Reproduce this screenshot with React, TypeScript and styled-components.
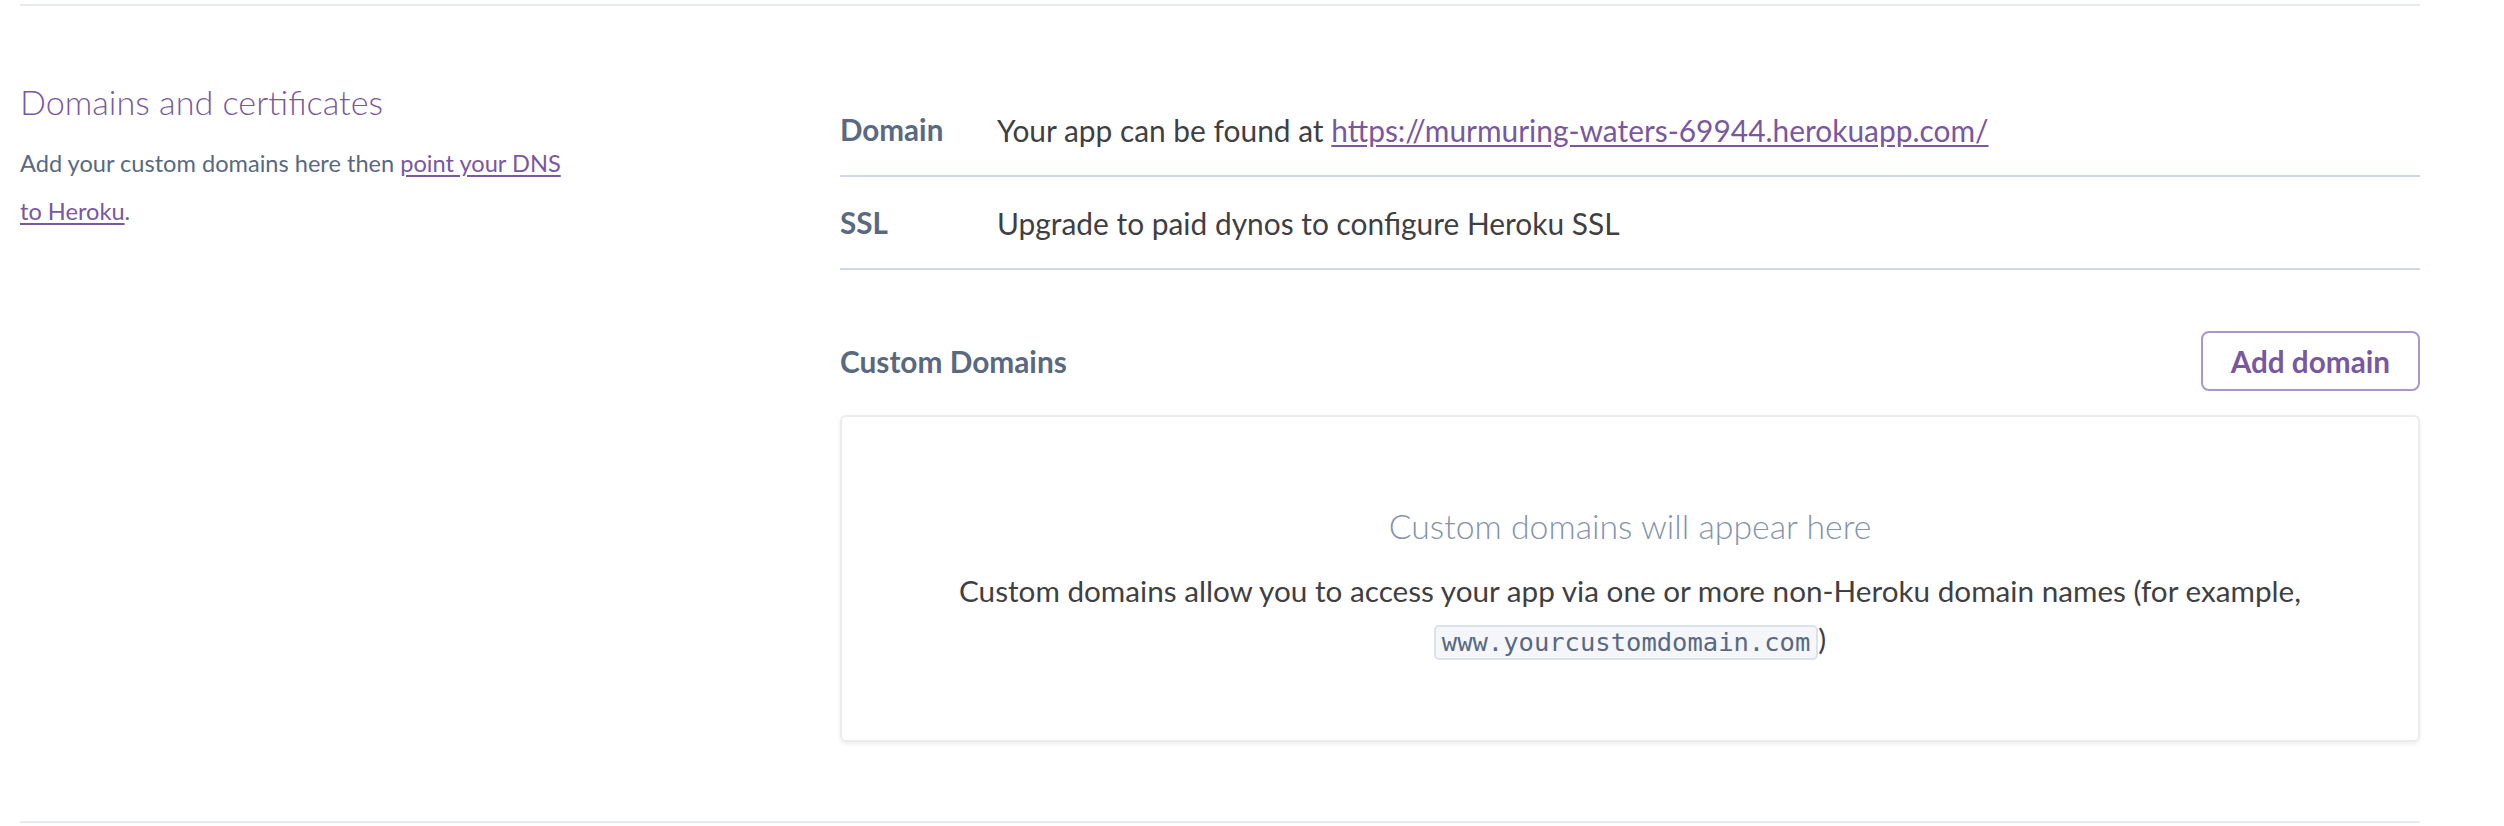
import React from "react";
import styled, { createGlobalStyle } from "styled-components";

const GlobalStyle = createGlobalStyle`
  html, body { margin: 0; padding: 0; background: #ffffff; }
  body { font-family: Lato, "Open Sans", sans-serif; -webkit-font-smoothing: antialiased; }
  * { box-sizing: border-box; }
`;

const Page = styled.div`
  padding: 4px 84px 0 20px;
`;

const Section = styled.section`
  display: grid;
  grid-template-columns: 550px 1580px;
  column-gap: 270px;
  align-items: start;
  border-top: 2px solid #e6e9f2;
  border-bottom: 2px solid #e6e9f2;
  padding: 78px 0 79px;
`;

const Aside = styled.div`
  display: flex;
  flex-direction: column;
  gap: 19px;
`;

const SectionTitle = styled.h3`
  margin: 0;
  font-size: 34.2px;
  line-height: 36px;
  font-weight: 300;
  color: #79589f;
`;

const SectionDesc = styled.p`
  margin: 0;
  font-size: 23.6px;
  line-height: 48px;
  color: #596981;
`;

const TextLink = styled.a`
  color: #79589f;
  text-decoration: underline;
  text-underline-offset: 3px;
`;

const Main = styled.div`
  display: flex;
  flex-direction: column;
`;

const InfoRow = styled.div`
  display: flex;
  align-items: center;
  height: 93px;
  border-bottom: 2px solid #cfd8e6;
`;

const Label = styled.div`
  width: 157px;
  flex: none;
  font-size: 29.6px;
  font-weight: 700;
  color: #596981;
`;

const Value = styled.div`
  font-size: 29.9px;
  line-height: 36px;
  color: #3f3f44;
`;

const SubHeader = styled.div`
  display: flex;
  align-items: center;
  justify-content: space-between;
  margin-top: 61px;
  height: 60px;
`;

const SubTitle = styled.h4`
  margin: 0;
  font-size: 29.8px;
  font-weight: 700;
  color: #596981;
`;

const OutlineButton = styled.button`
  height: 60px;
  padding: 0 28px;
  border: 2px solid #ab96c8;
  border-radius: 8px;
  background: #ffffff;
  font-family: Lato, sans-serif;
  font-size: 29.7px;
  font-weight: 700;
  color: #79589f;
  cursor: pointer;
`;

const EmptyCard = styled.div`
  margin-top: 24px;
  height: 327px;
  padding: 88px 40px 0;
  border: 2px solid #ececec;
  border-radius: 6px;
  box-shadow: 0 2px 4px rgba(0, 0, 0, 0.07);
  display: flex;
  flex-direction: column;
  align-items: center;
  text-align: center;
`;

const EmptyTitle = styled.div`
  font-size: 33.8px;
  line-height: 42px;
  font-weight: 300;
  color: #8593ad;
`;

const EmptyText = styled.p`
  margin: 20px 0 0;
  font-size: 29.7px;
  line-height: 48px;
  color: #3f3f44;
`;

const Code = styled.code`
  display: inline-block;
  white-space: nowrap;
  padding: 0 6px;
  line-height: 31px;
  border: 2px solid #dde1ea;
  border-radius: 5px;
  background: #f4f6fa;
  font-family: "DejaVu Sans Mono", "Liberation Mono", monospace;
  font-size: 25.5px;
  color: #596981;
  vertical-align: middle;
`;

export default function App() {
  return (
    <>
      <GlobalStyle />
      <Page>
        <Section>
          <Aside>
            <SectionTitle>Domains and certificates</SectionTitle>
            <SectionDesc>
              Add your custom domains here then <TextLink href="#">point your DNS to Heroku</TextLink>.
            </SectionDesc>
          </Aside>
          <Main>
            <InfoRow>
              <Label>Domain</Label>
              <Value>
                Your app can be found at{" "}
                <TextLink href="#">https://murmuring-waters-69944.herokuapp.com/</TextLink>
              </Value>
            </InfoRow>
            <InfoRow>
              <Label>SSL</Label>
              <Value>Upgrade to paid dynos to configure Heroku SSL</Value>
            </InfoRow>
            <SubHeader>
              <SubTitle>Custom Domains</SubTitle>
              <OutlineButton>Add domain</OutlineButton>
            </SubHeader>
            <EmptyCard>
              <EmptyTitle>Custom domains will appear here</EmptyTitle>
              <EmptyText>
                Custom domains allow you to access your app via one or more non-Heroku domain names (for example,{" "}
                <Code>www.yourcustomdomain.com</Code>)
              </EmptyText>
            </EmptyCard>
          </Main>
        </Section>
      </Page>
    </>
  );
}
